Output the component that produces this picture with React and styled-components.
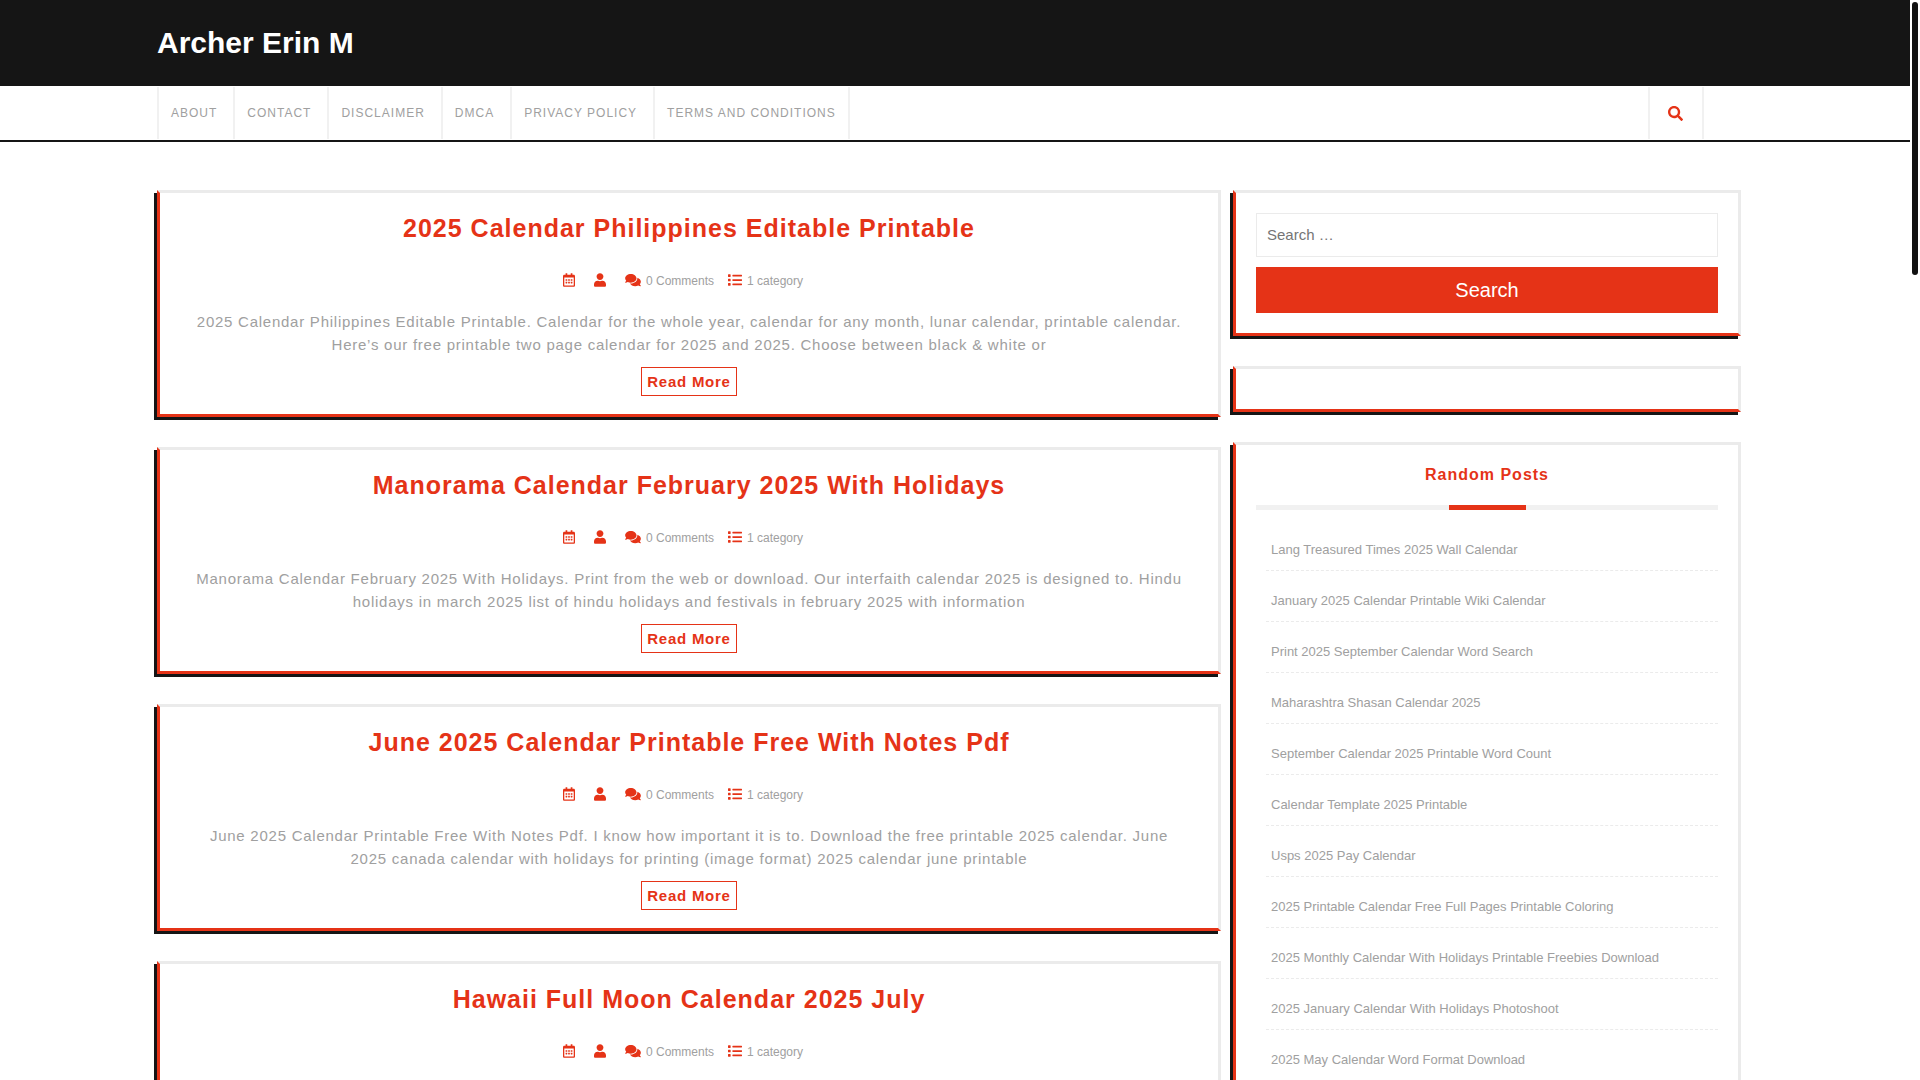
import React from "react";
import styled, { createGlobalStyle } from "styled-components";
import { FaSearch, FaRegCalendarAlt, FaUser, FaComments, FaList } from "react-icons/fa";

const red = "#e53317";
const dark = "#151515";
const line = "#ebebeb";
const soft = "#f1f1f1";
const muted = "#a0a0a0";

const GlobalStyle = createGlobalStyle`
  *, *::before, *::after { box-sizing: border-box; }
  html { scrollbar-width: none; }
  body {
    margin: 0;
    background: #fff;
    color: ${muted};
    font-family: "Liberation Sans", Arial, sans-serif;
    font-size: 15px;
  }
  a { color: inherit; text-decoration: none; }
`;

const Page = styled.div`
  margin-right: 10px;
`;

const ScrollThumb = styled.div`
  position: fixed;
  top: 2px;
  right: 2px;
  width: 6px;
  height: 273px;
  border-radius: 3px;
  background: #111;
`;

const Header = styled.header`
  padding: 25px 157px;
  background: ${dark};
`;

const SiteTitle = styled.h1`
  margin: 0;
  color: #fff;
  font-size: 30px;
  line-height: 36px;
`;

const NavBar = styled.div`
  display: flex;
  justify-content: space-between;
  padding: 1px 206px 1px 157px;
  border-bottom: 2px solid ${dark};
`;

const Nav = styled.nav`
  display: flex;
  gap: 4px;
  font-size: 12px;
  line-height: 52px;
  letter-spacing: 1px;
  text-transform: uppercase;
`;

const NavLink = styled.a`
  padding: 0 12px;
  border-left: 2px solid ${soft};

  &:last-child { border-right: 2px solid ${soft}; }
`;

const SearchToggle = styled.button`
  display: grid;
  place-items: center;
  width: 56px;
  padding: 0 2px 0 0;
  border: solid ${soft};
  border-width: 0 2px;
  background: none;
  color: ${red};
  font-size: 15px;
`;

const Layout = styled.div`
  display: grid;
  grid-template-columns: minmax(0, 1fr) 508px;
  gap: 12px;
  padding: 48px 169px 48px 157px;
`;

const Column = styled.div`
  display: flex;
  flex-direction: column;
  gap: 30px;
`;

const Panel = styled.section`
  padding: 20px;
  border: 3px solid ${line};
  border-left-color: ${red};
  border-bottom-color: ${red};
  box-shadow: -3px 3px 0 ${dark};
`;

const PostCard = styled(Panel).attrs({ as: "article" })`
  min-height: 227px;
  padding-bottom: 18px;
  text-align: center;
`;

const PostTitle = styled.h2`
  margin: 0 0 28px;
  color: ${red};
  font-size: 25px;
  line-height: 30px;
  letter-spacing: 1px;
`;

const Meta = styled.div`
  display: flex;
  justify-content: center;
  gap: 14px;
  margin-bottom: 19px;
  padding-right: 12px;
  font-size: 12px;
  line-height: 20px;
`;

const MetaItem = styled.span`
  display: flex;
  gap: 5px;

  svg {
    flex: none;
    width: ${(p) => p.$icon}px;
    height: 14px;
    margin-top: 2px;
    color: ${red};
  }
`;

const Excerpt = styled.p`
  margin: 0 0 11px;
  padding: 0 12px;
  line-height: 23px;
  letter-spacing: 0.05em;
`;

const ReadMore = styled.a`
  display: inline-block;
  vertical-align: top;
  padding: 5px;
  border: 1px solid ${red};
  color: ${red};
  font-weight: bold;
  line-height: 17px;
  letter-spacing: 0.05em;
`;

const SearchForm = styled.form`
  display: flex;
  flex-direction: column;
  gap: 10px;
`;

const SearchInput = styled.input`
  height: 44px;
  padding: 0 10px 2px;
  border: 1px solid ${line};
  background: #fff;
  font: 15px "Liberation Sans", Arial, sans-serif;

  &::placeholder { color: #757575; }
`;

const SearchButton = styled.button`
  height: 46px;
  border: 0;
  background: ${red};
  color: #fff;
  font: 20px "Liberation Sans", Arial, sans-serif;
`;

const WidgetTitle = styled.h2`
  margin: 0 0 10px;
  color: ${red};
  font-size: 16px;
  line-height: 20px;
  letter-spacing: 1px;
  text-align: center;

  &::after {
    content: "";
    display: block;
    height: 5px;
    margin-top: 20px;
    background: linear-gradient(${red}, ${red}) center / 77px 100% no-repeat ${soft};
  }
`;

const PostList = styled.ul`
  margin: 0;
  padding: 0 0 0 10px;
  list-style: none;
`;

const PostItem = styled.li`
  padding: 20px 5px 10px;
  border-bottom: 1px dashed ${line};
  font-size: 13px;
  line-height: 20px;
`;

const pages = ["About", "Contact", "Disclaimer", "DMCA", "Privacy Policy", "Terms and Conditions"];

const posts = [
  {
    title: "2025 Calendar Philippines Editable Printable",
    text: "2025 Calendar Philippines Editable Printable. Calendar for the whole year, calendar for any month, lunar calendar, printable calendar. Here’s our free printable two page calendar for 2025 and 2025. Choose between black & white or",
  },
  {
    title: "Manorama Calendar February 2025 With Holidays",
    text: "Manorama Calendar February 2025 With Holidays. Print from the web or download. Our interfaith calendar 2025 is designed to. Hindu holidays in march 2025 list of hindu holidays and festivals in february 2025 with information",
  },
  {
    title: "June 2025 Calendar Printable Free With Notes Pdf",
    text: "June 2025 Calendar Printable Free With Notes Pdf. I know how important it is to. Download the free printable 2025 calendar. June 2025 canada calendar with holidays for printing (image format) 2025 calendar june printable",
  },
  { title: "Hawaii Full Moon Calendar 2025 July" },
];

const randomPosts = [
  "Lang Treasured Times 2025 Wall Calendar",
  "January 2025 Calendar Printable Wiki Calendar",
  "Print 2025 September Calendar Word Search",
  "Maharashtra Shasan Calendar 2025",
  "September Calendar 2025 Printable Word Count",
  "Calendar Template 2025 Printable",
  "Usps 2025 Pay Calendar",
  "2025 Printable Calendar Free Full Pages Printable Coloring",
  "2025 Monthly Calendar With Holidays Printable Freebies Download",
  "2025 January Calendar With Holidays Photoshoot",
  "2025 May Calendar Word Format Download",
];

function Post({ title, text }) {
  return (
    <PostCard>
      <PostTitle><a href="#">{title}</a></PostTitle>
      <Meta>
        <MetaItem $icon={12}><FaRegCalendarAlt /><span /></MetaItem>
        <MetaItem $icon={12}><FaUser /><span /></MetaItem>
        <MetaItem $icon={16}><FaComments /><span>0 Comments</span></MetaItem>
        <MetaItem $icon={14}><FaList /><span>1 category</span></MetaItem>
      </Meta>
      {text && (
        <>
          <Excerpt>{text}</Excerpt>
          <ReadMore href="#">Read More</ReadMore>
        </>
      )}
    </PostCard>
  );
}

export default function App() {
  return (
    <>
      <GlobalStyle />
      <Page>
        <Header>
          <SiteTitle><a href="#">Archer Erin M</a></SiteTitle>
        </Header>
        <NavBar>
          <Nav>
            {pages.map((name) => <NavLink key={name} href="#">{name}</NavLink>)}
          </Nav>
          <SearchToggle type="button" aria-label="Search"><FaSearch /></SearchToggle>
        </NavBar>
        <Layout>
          <Column as="main">
            {posts.map((post) => <Post key={post.title} {...post} />)}
          </Column>
          <Column as="aside">
            <Panel>
              <SearchForm onSubmit={(e) => e.preventDefault()}>
                <SearchInput type="search" placeholder="Search …" aria-label="Search" />
                <SearchButton type="submit">Search</SearchButton>
              </SearchForm>
            </Panel>
            <Panel />
            <Panel>
              <WidgetTitle>Random Posts</WidgetTitle>
              <PostList>
                {randomPosts.map((name) => (
                  <PostItem key={name}><a href="#">{name}</a></PostItem>
                ))}
              </PostList>
            </Panel>
          </Column>
        </Layout>
      </Page>
      <ScrollThumb />
    </>
  );
}
